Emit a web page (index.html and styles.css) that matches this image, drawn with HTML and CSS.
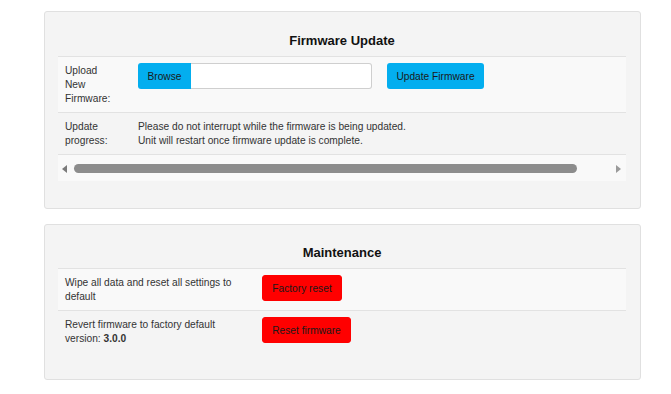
FILE: index.html
```html
<!DOCTYPE html>
<html lang="en">
<head>
    <meta charset="UTF-8">
    <meta name="viewport" content="width=device-width, initial-scale=1.0">
    <title>Firmware</title>
    <link rel="stylesheet" href="styles.css">
</head>
<body>
    <div class="page">
        <div class="panel fw">
            <h2>Firmware Update</h2>
            <table class="grid">
                <tr class="odd">
                    <td class="label">Upload<br>New<br>Firmware:</td>
                    <td class="value">
                        <div class="upload">
                            <button class="btn blue browse">Browse</button>
                            <input class="file" type="text">
                            <button class="btn blue update">Update Firmware</button>
                        </div>
                    </td>
                </tr>
                <tr>
                    <td class="label">Update<br>progress:</td>
                    <td class="value text">Please do not interrupt while the firmware is being updated.<br>Unit will restart once firmware update is complete.</td>
                </tr>
                <tr class="odd">
                    <td colspan="2" class="scroll">
                        <div class="scrollbar">
                            <span class="arrow left"></span>
                            <span class="thumb"></span>
                            <span class="arrow right"></span>
                        </div>
                    </td>
                </tr>
            </table>
        </div>

        <div class="panel maint">
            <h2>Maintenance</h2>
            <table class="grid">
                <tr class="odd">
                    <td class="label wide">Wipe all data and reset all settings to default</td>
                    <td class="value"><button class="btn red factory">Factory reset</button></td>
                </tr>
                <tr>
                    <td class="label wide">Revert firmware to factory default version: <b>3.0.0</b></td>
                    <td class="value"><button class="btn red revert">Reset firmware</button></td>
                </tr>
            </table>
        </div>
    </div>
</body>
</html>
```

FILE: styles.css
```css
body {
    margin: 0;
    background: #fff;
    font-family: "Liberation Sans", Arial, sans-serif;
    font-size: 10.2px;
    line-height: 14px;
    color: #333;
}
.page {
    padding: 11px 0 0 44px;
}
.panel {
    width: 597px;
    box-sizing: border-box;
    background: #f4f4f4;
    border: 1px solid #e0e0e0;
    border-radius: 3px;
    padding: 21px 14px 0 13px;
}
.panel.fw {
    height: 198px;
}
.panel.maint {
    margin-top: 15px;
    height: 156px;
    padding-top: 20px;
}
h2 {
    margin: 0 0 8px;
    font-size: 13px;
    line-height: 15px;
    font-weight: bold;
    color: #111;
    text-align: center;
}
.grid {
    width: 568px;
    border-collapse: collapse;
    table-layout: fixed;
}
.grid td {
    border-top: 1px solid #e2e2e2;
    vertical-align: top;
    padding: 6px 7px 6px 0;
    box-sizing: border-box;
}
.grid tr.odd td {
    background: #f9f9f9;
}
.grid td.label {
    width: 80px;
    padding-left: 7px;
    padding-top: 7px;
}
.grid td.label.wide {
    width: 204px;
    padding-right: 17px;
}
.grid td.text {
    padding-top: 7px;
}
.upload {
    display: flex;
    align-items: center;
}
.btn {
    height: 26px;
    border: 1px solid transparent;
    border-radius: 3px;
    font-family: "Liberation Sans", Arial, sans-serif;
    font-size: 10.2px;
    color: #1a1a1a;
    padding: 0;
    white-space: nowrap;
    cursor: pointer;
}
.blue {
    background: #03aeef;
}
.red {
    background: #ff0000;
    border-color: #f00;
}
.browse {
    width: 53px;
    border-radius: 3px 0 0 3px;
}
.file {
    width: 181px;
    height: 26px;
    box-sizing: border-box;
    border: 1px solid #cfcfcf;
    border-left: none;
    border-radius: 0 3px 3px 0;
    background: #fff;
    margin: 0;
}
.update {
    width: 97px;
    margin-left: 15px;
}
.factory {
    width: 80px;
}
.revert {
    width: 89px;
}
.grid td.scroll {
    height: 26px;
    padding: 0;
    background: #fafafa;
}
.scrollbar {
    display: flex;
    align-items: center;
    height: 26px;
    padding: 1px 0 0 4px;
    box-sizing: border-box;
}
.thumb {
    width: 503px;
    height: 9px;
    border-radius: 5px;
    background: #8c8c8c;
    margin: 0 39px 0 7px;
}
.arrow {
    width: 0;
    height: 0;
    border-top: 4px solid transparent;
    border-bottom: 4px solid transparent;
}
.arrow.left {
    border-right: 5px solid #7a7a7a;
}
.arrow.right {
    border-left: 5px solid #9a9a9a;
}
```
